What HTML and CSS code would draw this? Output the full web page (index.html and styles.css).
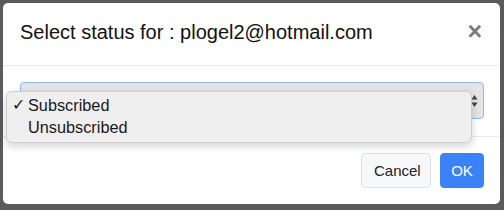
FILE: index.html
```html
<!DOCTYPE html>
<html>
<head>
<meta charset="utf-8">
<link rel="stylesheet" href="styles.css">
</head>
<body>
<div class="modal">
  <div class="modal-header">
    <h5 class="modal-title">Select status for : plogel2@hotmail.com</h5>
    <span class="close">&times;</span>
  </div>
  <div class="modal-body">
    <div class="select">
      <span class="arrows">
        <svg width="7" height="14" viewBox="0 0 7 14"><path d="M3.5 1 L6.5 5.5 L0.5 5.5 Z M3.5 13 L6.5 8.5 L0.5 8.5 Z" fill="#444"/></svg>
      </span>
    </div>
  </div>
  <div class="modal-footer">
    <button class="btn btn-secondary">Cancel</button>
    <button class="btn btn-primary">OK</button>
  </div>
  <div class="dropdown">
    <div class="option"><span class="check">✓</span>Subscribed</div>
    <div class="option"><span class="check"></span>Unsubscribed</div>
  </div>
</div>
</body>
</html>
```
FILE: styles.css
```css
html, body {
  margin: 0;
  padding: 0;
}
body {
  background: #5b5b5b;
  width: 504px;
  height: 210px;
  padding: 3px 4px 6px 3px;
  box-sizing: border-box;
  font-family: "Liberation Sans", Arial, sans-serif;
  color: #212529;
}
.modal {
  position: relative;
  background: #fff;
  border-radius: 5px;
  height: 201px;
  display: flex;
  flex-direction: column;
}
.modal-header {
  height: 63px;
  box-sizing: border-box;
  border-bottom: 1px solid #e9ecef;
  display: flex;
  align-items: center;
  justify-content: space-between;
  padding: 0 18px 3px 17px;
}
.modal-title {
  margin: 0;
  font-size: 20px;
  font-weight: normal;
  color: #111;
}
.close {
  font-size: 25px;
  font-weight: bold;
  color: #7a7a7a;
  line-height: 1;
  margin-top: -2px;
}
.modal-body {
  height: 71px;
  box-sizing: border-box;
  border-bottom: 1px solid #e9ecef;
  padding: 16px 16px 0 17px;
}
.select {
  height: 37px;
  box-sizing: border-box;
  border: 1px solid #8fb8f4;
  border-radius: 4px;
  background: #e4e4e4;
  display: flex;
  align-items: center;
  justify-content: flex-end;
  padding-right: 5px;
}
.arrows {
  display: flex;
}
.modal-footer {
  flex: 1;
  display: flex;
  justify-content: flex-end;
  align-items: flex-start;
  gap: 9px;
  padding: 16px 16px 0 0;
}
.btn {
  font-family: "Liberation Sans", Arial, sans-serif;
  font-size: 15px;
  height: 35px;
  border-radius: 4px;
  padding: 0 12px;
  cursor: pointer;
}
.btn-secondary {
  background: #f7f8fa;
  border: 1px solid #dcdfe3;
  color: #222;
  width: 70px;
}
.btn-primary {
  background: #3a82f6;
  border: 1px solid #3a82f6;
  color: #fff;
  width: 44px;
  padding: 0;
}
.dropdown {
  position: absolute;
  left: 3px;
  top: 88px;
  width: 466px;
  height: 52px;
  box-sizing: border-box;
  background: #efefef;
  border: 1px solid #cfcfcf;
  border-radius: 6px;
  box-shadow: 0 3px 8px rgba(0,0,0,0.18);
  padding-top: 2px;
}
.option {
  font-size: 16.3px;
  color: #1a1a1a;
  height: 22px;
  line-height: 22px;
  display: flex;
}
.check {
  width: 21px;
  text-align: right;
  padding-right: 3px;
  box-sizing: border-box;
  font-size: 16px;
}
```
